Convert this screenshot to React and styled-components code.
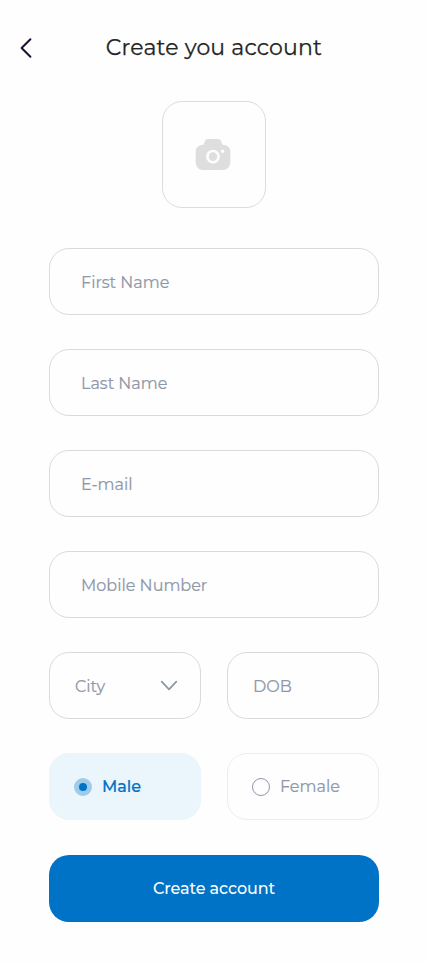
import React, { useState } from "react";
import styled, { createGlobalStyle } from "styled-components";

const GlobalStyle = createGlobalStyle`
  *, *::before, *::after { box-sizing: border-box; }
  body {
    margin: 0;
    background: #fefefe;
    font-family: Montserrat, Inter, sans-serif;
  }
  button { font: inherit; cursor: pointer; }
`;

const Screen = styled.main`
  width: 428px;
  min-height: 962px;
  margin: 0 auto;
  display: flex;
  flex-direction: column;
  align-items: center;
`;

const Header = styled.header`
  width: 100%;
  height: 101px;
  padding: 34px 12px 0;
  display: grid;
  grid-template-columns: 28px 1fr 28px;
  align-items: start;
`;

const BackButton = styled.button`
  width: 28px;
  height: 28px;
  padding: 0;
  border: 0;
  background: none;
  svg { display: block; }
`;

const Title = styled.h1`
  margin: 0;
  font-size: 22px;
  line-height: 27px;
  font-weight: 400;
  -webkit-text-stroke: 0.25px currentColor;
  letter-spacing: 0.17px;
  text-align: center;
  color: #242424;
`;

const PhotoButton = styled.button`
  width: 104px;
  height: 107px;
  padding: 0 2px 0 0;
  border: 1px solid #dcdcdc;
  border-radius: 20px;
  background: #fefefe;
  display: flex;
  align-items: center;
  justify-content: center;
`;

const Form = styled.form`
  width: 330px;
  margin-top: 40px;
  display: flex;
  flex-direction: column;
  gap: 34px;
`;

const Row = styled.div`
  display: grid;
  grid-template-columns: 152px 152px;
  column-gap: 26px;
`;

const Field = styled.div`
  height: 67px;
  padding: 0 ${(p) => (p.$compact ? "22px 0 25px" : "31px")};
  border: 1px solid #dadada;
  border-radius: 20px;
  display: flex;
  align-items: center;
  justify-content: space-between;
  font-size: 16px;
  line-height: 20px;
  font-weight: 400;
  -webkit-text-stroke: 0.2px currentColor;
  color: #8f98a8;
`;

const FieldLabel = styled.span`
  padding-top: 2px;
`;

const Option = styled.button`
  height: 67px;
  padding: 0 24px;
  border: 1px solid ${(p) => (p.$active ? "#eaf6fb" : "#ededed")};
  border-radius: 20px;
  background: ${(p) => (p.$active ? "#eaf6fb" : "#fefefe")};
  color: ${(p) => (p.$active ? "#0073c6" : "#8f98a8")};
  display: flex;
  align-items: center;
  gap: 10px;
  font-size: 16px;
  line-height: 20px;
  font-weight: ${(p) => (p.$active ? 500 : 400)};
  -webkit-text-stroke: 0.2px currentColor;
`;

const Radio = styled.span`
  width: 18px;
  height: 18px;
  border-radius: 50%;
  border: ${(p) => (p.$active ? "5px solid #9fcbea" : "1px solid #8f98a8")};
  background: ${(p) => (p.$active ? "#0073c6" : "transparent")};
`;

const Submit = styled.button`
  height: 67px;
  margin-top: 1px;
  padding: 0;
  border: 0;
  border-radius: 20px;
  background: #0073c6;
  color: #fefefe;
  font-size: 16px;
  line-height: 20px;
  font-weight: 500;
  letter-spacing: -0.1px;
`;

const BackIcon = () => (
  <svg width="28" height="28" viewBox="0 0 28 28" fill="none">
    <path d="M18.4 5.2 9.6 14l8.8 8.8" stroke="#1f1135" strokeWidth="2" strokeLinecap="round" strokeLinejoin="round" />
  </svg>
);

const CameraIcon = () => (
  <svg width="36" height="32" viewBox="0 0 36 32">
    <path
      d="M13.4 0h9.2c3 0 3.5 2 4.3 4.2.5 1.4 1 1.7 2.4 1.9 3.6.5 6 3 6 6.6v10.3c0 4.7-3 8-7.7 8H8.4c-4.7 0-7.7-3.3-7.7-8V12.7c0-3.6 2.4-6.1 6-6.6 1.4-.2 1.9-.5 2.4-1.9.8-2.2 1.3-4.2 4.3-4.2Z"
      fill="#dedede"
    />
    <circle cx="18" cy="17.6" r="5.6" fill="none" stroke="#fefefe" strokeWidth="2.6" />
    <circle cx="27.6" cy="12.2" r="1.7" fill="#fefefe" />
  </svg>
);

const ChevronIcon = () => (
  <svg width="18" height="12" viewBox="0 0 18 12" fill="none">
    <path d="M1.7 1.7 9 9.3l7.3-7.6" stroke="#8f98a8" strokeWidth="1.8" strokeLinecap="round" strokeLinejoin="round" />
  </svg>
);

export default function App() {
  const [gender, setGender] = useState("Male");
  return (
    <>
      <GlobalStyle />
      <Screen>
        <Header>
          <BackButton type="button" aria-label="Back"><BackIcon /></BackButton>
          <Title>Create you account</Title>
        </Header>
        <PhotoButton type="button" aria-label="Add photo"><CameraIcon /></PhotoButton>
        <Form onSubmit={(e) => e.preventDefault()}>
          {["First Name", "Last Name", "E-mail", "Mobile Number"].map((label) => (
            <Field key={label}><FieldLabel>{label}</FieldLabel></Field>
          ))}
          <Row>
            <Field $compact><FieldLabel>City</FieldLabel><ChevronIcon /></Field>
            <Field $compact><FieldLabel>DOB</FieldLabel></Field>
          </Row>
          <Row>
            {["Male", "Female"].map((label) => (
              <Option key={label} type="button" $active={gender === label} onClick={() => setGender(label)}>
                <Radio $active={gender === label} />
                <span>{label}</span>
              </Option>
            ))}
          </Row>
          <Submit type="submit">Create account</Submit>
        </Form>
      </Screen>
    </>
  );
}
